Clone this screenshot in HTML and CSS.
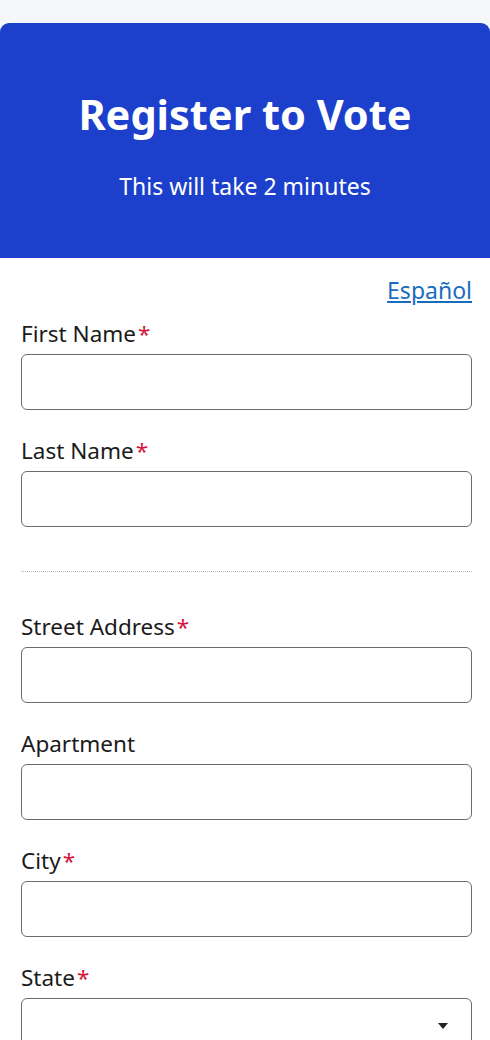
FILE: index.html
```html
<!DOCTYPE html>
<html lang="en">
<head>
  <meta charset="UTF-8" />
  <title>Register to Vote</title>
  <link rel="stylesheet" href="styles.css">
</head>
<body>
<div class="page">
  <header class="hero">
    <h1>Register to Vote</h1>
    <p>This will take 2 minutes</p>
  </header>

  <form class="form">
    <div class="lang"><a href="#">Español</a></div>

    <label class="field">
      <span class="label">First Name<span class="req">*</span></span>
      <input type="text" required>
    </label>

    <label class="field">
      <span class="label">Last Name<span class="req">*</span></span>
      <input type="text" required>
    </label>

    <hr class="divider">

    <label class="field">
      <span class="label">Street Address<span class="req">*</span></span>
      <input type="text" required>
    </label>

    <label class="field">
      <span class="label">Apartment</span>
      <input type="text">
    </label>

    <label class="field">
      <span class="label">City<span class="req">*</span></span>
      <input type="text" required>
    </label>

    <label class="field">
      <span class="label">State<span class="req">*</span></span>
      <span class="select">
        <select required>
          <option value=""></option>
        </select>
        <svg class="caret" width="10" height="6" viewBox="0 0 10 6"><path d="M0 0h10L5 6z" fill="#222"/></svg>
      </span>
    </label>
  </form>
</div>
</body>
</html>
```

FILE: styles.css
```css
* {
  box-sizing: border-box;
}

body {
  margin: 0;
  background-color: #f6f7fb;
  font-family: 'Noto Sans', 'Open Sans', sans-serif;
  color: #1b1b1b;
}

.page {
  padding-top: 23px;
}

.hero {
  background-color: #1c40cc;
  color: white;
  text-align: center;
  border-radius: 9px 9px 0 0;
  height: 235px;
  padding-top: 65px;
}

.hero h1 {
  margin: 0;
  font-size: 41.5px;
  font-weight: 700;
  line-height: 52px;
}

.hero p {
  margin: 31px 0 0;
  font-size: 23px;
  line-height: 30px;
}

.form {
  background: white;
  padding: 18px 18px 40px 21px;
}

.lang {
  text-align: right;
  font-size: 23px;
  line-height: 28px;
}

.lang a {
  color: #1a6dbd;
}

.field {
  display: block;
  margin-top: 16px;
}

.field + .field {
  margin-top: 27px;
}

.label {
  display: block;
  font-size: 22.5px;
  line-height: 28px;
  margin-bottom: 6px;
}

.req {
  color: #d5163c;
  margin-left: 2px;
}

input,
select {
  display: block;
  width: 100%;
  height: 56px;
  border: 1.5px solid #6c6c70;
  border-radius: 6px;
  background: white;
  font-size: 18px;
  padding: 0 14px;
  margin: 0;
}

select {
  appearance: none;
  -webkit-appearance: none;
}

.select {
  display: block;
  position: relative;
}

.caret {
  position: absolute;
  right: 24px;
  top: 25px;
  pointer-events: none;
}

.divider {
  border: none;
  border-top: 1px dotted #b5b5b5;
  margin: 44px 0 0;
}

.divider + .field {
  margin-top: 41px;
}
```
